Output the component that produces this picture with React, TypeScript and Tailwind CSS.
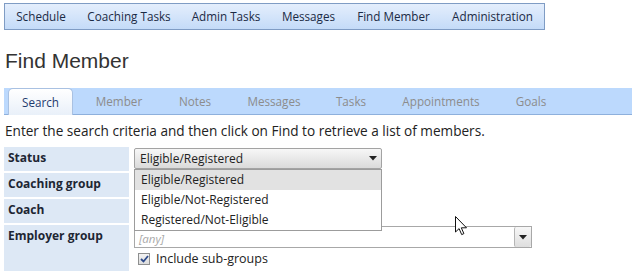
import React from "react";

const menu = [
  { label: "Schedule", w: "w-[72px]" },
  { label: "Coaching Tasks", w: "w-[104px]" },
  { label: "Admin Tasks", w: "w-[90px]" },
  { label: "Messages", w: "w-[75px]" },
  { label: "Find Member", w: "w-[95px]" },
  { label: "Administration", w: "w-[103px]" },
];

const tabs = [
  { label: "Member", w: "w-[92px]" },
  { label: "Notes", w: "w-[60px]" },
  { label: "Messages", w: "w-[98px]" },
  { label: "Tasks", w: "w-[56px]" },
  { label: "Appointments", w: "w-[124px]" },
  { label: "Goals", w: "w-[56px]" },
];

const statusOptions = ["Eligible/Registered", "Eligible/Not-Registered", "Registered/Not-Eligible"];

const Caret = () => (
  <svg width="8" height="5" viewBox="0 0 8 5">
    <path d="M0 0h8L4 4.5z" fill="#222" />
  </svg>
);

const App = () => {
  return (
    <div className="relative h-[273px] w-[632px] overflow-hidden bg-white pl-[4px] pt-[3px] font-['Open_Sans',sans-serif] text-[12px] text-[#222]">
      {/* top menu */}
      <div className="flex h-[27px] w-[541px] items-center border border-[#7f9cc4] bg-gradient-to-b from-[#e4eefc] to-[#c4dbf8]">
        {menu.map((m) => (
          <div key={m.label} className={`${m.w} text-center text-[11.7px] text-[#1b2a44]`}>
            {m.label}
          </div>
        ))}
      </div>

      <h1 className="mt-[18px] pl-[1px] font-['Liberation_Sans',sans-serif] text-[21px] leading-[26px] text-[#333]">
        Find Member
      </h1>

      {/* tabs */}
      <div className="mt-[14px] flex h-[27px] items-end border-b border-[#8eb0dc] bg-[#bcd9fd] pl-[4px]">
        <div className="mb-[-1px] flex h-[27px] w-[65px] items-center justify-center rounded-t-[5px] border border-b-0 border-[#a9c1e2] bg-gradient-to-b from-white to-[#e9f0f9] pt-[2px] text-[11.7px] text-[#1f3a6e]">
          Search
        </div>
        {tabs.map((t) => (
          <div key={t.label} className={`${t.w} flex h-[26px] items-center justify-center pt-[2px] text-[11.7px] text-[#8c8c8c]`}>
            {t.label}
          </div>
        ))}
      </div>

      <p className="mt-[6px] pl-[1px] text-[13.6px] leading-[19px] text-[#222]">
        Enter the search criteria and then click on Find to retrieve a list of members.
      </p>

      {/* form */}
      <div className="relative mt-[7px] flex flex-col gap-[2px]">
        <div className="flex h-[24px] gap-[5px]">
          <div className="w-[125px] bg-[#dde8f5] pl-[4px] pt-[2px] font-bold text-[#1d2633]">Status</div>
          <div className="pt-[1px]">
            <div className="flex h-[21px] w-[248px] items-center justify-between rounded-[2px] border border-[#a3a3a3] bg-gradient-to-b from-[#f7f7f7] to-[#dadada] pl-[5px] pr-[4px]">
              <span>Eligible/Registered</span>
              <Caret />
            </div>
          </div>
        </div>
        <div className="flex h-[24px] gap-[5px]">
          <div className="w-[125px] bg-[#dde8f5] pl-[4px] pt-[2px] font-bold text-[#1d2633]">Coaching group</div>
        </div>
        <div className="flex h-[24px] gap-[5px]">
          <div className="w-[125px] bg-[#dde8f5] pl-[4px] pt-[2px] font-bold text-[#1d2633]">Coach</div>
        </div>
        <div className="flex h-[46px] gap-[5px]">
          <div className="w-[125px] bg-[#dde8f5] pl-[4px] pt-[2px] font-bold text-[#1d2633]">Employer group</div>
          <div className="flex flex-col gap-[4px] pt-[1px]">
            <div className="flex h-[22px] w-[398px] items-stretch border border-[#a8a8a8] bg-white">
              <span className="flex flex-1 items-center pl-[4px] pt-[3px] text-[11.5px] italic text-[#a8a8a8]">[any]</span>
              <div className="flex w-[17px] items-center justify-center rounded-[2px] border-l border-[#b5b5b5] bg-gradient-to-b from-[#f7f7f7] to-[#dedede]">
                <Caret />
              </div>
            </div>
            <label className="flex h-[14px] items-center gap-[6px] pl-[4px] text-[12.5px]">
              <span className="flex h-[12px] w-[12px] items-center justify-center border border-[#8e8f8f] bg-gradient-to-b from-[#f3f3f3] to-[#dcdcdc]">
                <svg width="9" height="8" viewBox="0 0 9 8">
                  <path d="M1 4l2.5 2.5L8 1" stroke="#2d4a8a" strokeWidth="1.8" fill="none" />
                </svg>
              </span>
              Include sub-groups
            </label>
          </div>
        </div>
        <div className="flex h-[24px] gap-[5px]">
          <div className="w-[125px] bg-[#dde8f5]" />
        </div>

        {/* open status list */}
        <div className="absolute left-[130px] top-[22px] w-[248px] border border-[#9c9c9c] bg-white">
          {statusOptions.map((o, i) => (
            <div
              key={o}
              className={`h-[20px] pl-[6px] text-[12px] leading-[20px] ${i === 0 ? "bg-[#e2e2e2]" : ""}`}
            >
              {o}
            </div>
          ))}
        </div>
      </div>

      {/* mouse pointer */}
      <svg className="absolute left-[455px] top-[216px]" width="13" height="20" viewBox="0 0 13 20">
        <path d="M0.5 0.5v15.5l3.6-3.4 2.6 6 2.2-1-2.6-5.8h5.2z" fill="white" stroke="#111" strokeWidth="1" />
      </svg>
    </div>
  );
};

export default App;
